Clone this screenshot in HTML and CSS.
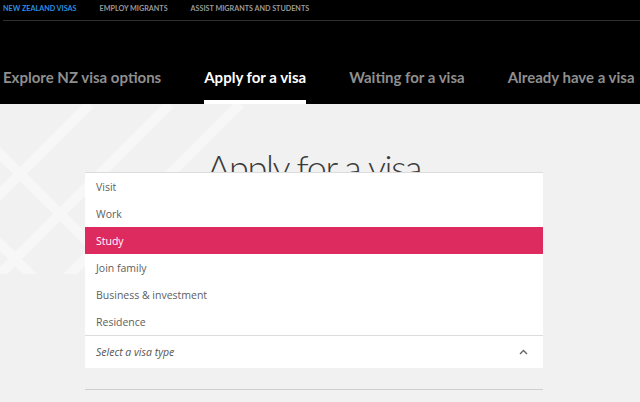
FILE: index.html
```html
<!DOCTYPE html>
<html lang="en">
<head>
<meta charset="utf-8">
<title>Apply for a visa</title>
<link rel="stylesheet" href="styles.css">
</head>
<body>
<header class="masthead">
  <nav class="utility">
    <a class="util-link active" href="#">New Zealand visas</a>
    <a class="util-link" href="#">Employ migrants</a>
    <a class="util-link" href="#">Assist migrants and students</a>
  </nav>
  <nav class="tabs">
    <a class="tab" href="#">Explore NZ visa options</a>
    <a class="tab active" href="#">Apply for a visa</a>
    <a class="tab" href="#">Waiting for a visa</a>
    <a class="tab" href="#">Already have a visa</a>
  </nav>
</header>
<main class="content">
  <svg class="pattern" width="260" height="170" viewBox="0 0 260 170" aria-hidden="true">
    <g stroke="#f7f7f7" stroke-width="10" fill="none">
      <line x1="-60" y1="150" x2="90" y2="0"/>
      <line x1="-20" y1="190" x2="170" y2="0"/>
      <line x1="30" y1="210" x2="240" y2="0"/>
      <line x1="-10" y1="40" x2="150" y2="200"/>
      <line x1="-40" y1="100" x2="80" y2="220"/>
    </g>
  </svg>
  <h1 class="title">Apply for a visa</h1>
  <div class="picker">
    <ul class="options">
      <li class="option">Visit</li>
      <li class="option">Work</li>
      <li class="option selected">Study</li>
      <li class="option">Join family</li>
      <li class="option">Business &amp; investment</li>
      <li class="option">Residence</li>
    </ul>
    <div class="select">
      <span class="placeholder">Select a visa type</span>
      <svg class="chevron" width="9" height="6" viewBox="0 0 9 6" aria-hidden="true"><path d="M1 5 L4.5 1.5 L8 5" stroke="#666" stroke-width="1.4" fill="none"/></svg>
    </div>
  </div>
  <hr class="rule">
</main>
</body>
</html>
```
FILE: styles.css
```css
* { box-sizing: border-box; }
html, body { margin: 0; padding: 0; }
body {
  background: #f1f1f1;
  font-family: "Open Sans", "DejaVu Sans", sans-serif;
  width: 640px;
  height: 402px;
  overflow: hidden;
}
a { text-decoration: none; }
.masthead {
  background: #000;
  height: 104px;
  display: flex;
  flex-direction: column;
}
.utility {
  display: flex;
  gap: 23px;
  margin: 0 0 0 3px;
  height: 21px;
  padding-top: 4px;
  border-bottom: 1px solid #2e2e2e;
}
.util-link {
  font-family: "Lato", sans-serif;
  font-weight: 700;
  font-size: 7.2px;
  text-transform: uppercase;
  color: #9a9a9a;
}
.util-link.active {
  color: #2b8fe0;
}
.tabs {
  display: flex;
  gap: 43px;
  margin-top: auto;
  padding-left: 3px;
}
.tab {
  font-family: "Lato", sans-serif;
  font-weight: 700;
  font-size: 15px;
  color: #8f8f8f;
  padding-bottom: 14px;
  border-bottom: 4px solid transparent;
  white-space: nowrap;
}
.tab.active {
  color: #fff;
  border-bottom-color: #fff;
}
.content {
  position: relative;
  padding-top: 40px;
}
.pattern {
  position: absolute;
  left: 0;
  top: 0;
}
.title {
  position: relative;
  margin: 0;
  text-align: center;
  font-family: "Lato", sans-serif;
  font-weight: 300;
  font-size: 36px;
  letter-spacing: -1.4px;
  color: #3a3a3a;
  line-height: 46px;
  padding-right: 12px;
}
.picker {
  position: relative;
  width: 458px;
  margin: 146px 0 0 85px;
  background: #fff;
}
.options {
  position: absolute;
  left: 0;
  right: 0;
  bottom: 100%;
  margin: 0;
  padding: 0;
  list-style: none;
  background: #fff;
  border-top: 1px solid #dcdcdc;
  border-bottom: 1px solid #dcdcdc;
}
.option {
  height: 27px;
  display: flex;
  align-items: center;
  padding-left: 11px;
  font-size: 10.5px;
  color: #606060;
}
.option.selected {
  background: #dd2a5f;
  color: #fff;
}
.select {
  height: 32px;
  display: flex;
  align-items: center;
  justify-content: space-between;
  padding: 0 15px 0 11px;
}
.placeholder {
  font-style: italic;
  font-size: 10.5px;
  color: #555;
}
.rule {
  width: 458px;
  margin: 21px 0 0 85px;
  border: 0;
  border-top: 1px solid #cfcfcf;
}
```
